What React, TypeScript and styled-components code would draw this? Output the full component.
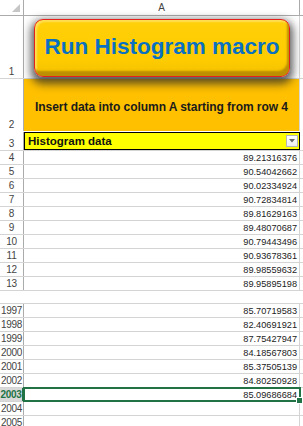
import React from "react";
import styled, { createGlobalStyle, css } from "styled-components";

const Global = createGlobalStyle`
  html, body { margin: 0; padding: 0; background: #fff; }
  body { font-family: "Liberation Sans", Arial, sans-serif; }
`;

const Sheet = styled.div`
  width: 303px;
  height: 426px;
  overflow: hidden;
  background: #fff;
  display: flex;
  flex-direction: column;
`;

const Row = styled.div<{ $h: number; $line?: string }>`
  display: grid;
  grid-template-columns: 24px 276px 3px;
  height: ${(p) => p.$h}px;
  box-sizing: border-box;
  border-bottom: 1px solid ${(p) => p.$line ?? "#d4d4d4"};
  flex: none;
`;

const HeaderRow = styled(Row)`
  border-bottom: 1px solid #ababab;
`;

const RowHead = styled.div<{ $sel?: boolean }>`
  box-sizing: border-box;
  border-right: 1px solid #ababab;
  display: flex;
  align-items: flex-end;
  justify-content: center;
  font-size: 10px;
  line-height: 12px;
  color: #444;
  font-family: "Liberation Sans", Arial, sans-serif;
  letter-spacing: -0.3px;
  ${(p) =>
    p.$sel &&
    css`
      background: #d9d9d9;
      color: #217346;
      font-weight: bold;
      border-right: 2px solid #217346;
    `}
`;

const Corner = styled.div`
  box-sizing: border-box;
  border-right: 1px solid #ababab;
  position: relative;
`;

const CornerTri = styled.svg`
  position: absolute;
  right: 3px;
  bottom: 3px;
`;

const ColHead = styled.div`
  box-sizing: border-box;
  border-right: 1px solid #ababab;
  display: flex;
  align-items: center;
  justify-content: center;
  font-size: 10px;
  color: #444;
`;

const Cell = styled.div<{ $bg?: string }>`
  box-sizing: border-box;
  border-right: 1px solid #d4d4d4;
  background: ${(p) => p.$bg ?? "transparent"};
  position: relative;
`;

const MacroCell = styled(Cell)`
  display: flex;
  align-items: center;
  justify-content: center;
`;

const MacroButton = styled.div`
  position: relative;
  z-index: 2;
  width: 256px;
  height: 58px;
  margin-top: 2px;
  margin-left: 1px;
  box-sizing: border-box;
  border: 1.5px solid #e3201b;
  border-radius: 9px;
  background: linear-gradient(#ffcf08, #ffcc00 70%, #f2c000);
  box-shadow: 0 4px 8px 3px rgba(40, 40, 40, 0.75),
    inset -3px -6px 2px -1px rgba(170, 125, 0, 0.75),
    inset 2px 2px 2px rgba(255, 235, 140, 0.6);
  display: flex;
  align-items: center;
  justify-content: center;
  color: #0a70c2;
  font-weight: bold;
  font-size: 22.5px;
  padding-bottom: 2px;
`;

const NoteCell = styled(Cell)`
  display: flex;
  align-items: center;
  justify-content: center;
  padding-top: 3px;
  font-weight: bold;
  font-size: 12px;
  color: #1b1b1b;
  letter-spacing: -0.05px;
`;

const TitleCell = styled.div`
  box-sizing: border-box;
  background: #ffff00;
  border: 1px solid #000;
  display: flex;
  align-items: center;
  justify-content: space-between;
  padding: 0 1px 0 3px;
  font-weight: bold;
  font-size: 11.5px;
  color: #111;
`;

const FilterBtn = styled.div`
  width: 12px;
  height: 12px;
  box-sizing: border-box;
  border: 1px solid #b5b5b5;
  background: linear-gradient(#ffffff, #ececec);
  display: flex;
  align-items: center;
  justify-content: center;
`;

const NumCell = styled(Cell)<{ $sel?: boolean }>`
  display: flex;
  align-items: flex-end;
  justify-content: flex-end;
  padding-right: 2px;
  font-size: 9.2px;
  line-height: 12px;
  color: #222;
  ${(p) =>
    p.$sel &&
    css`
      outline: 2px solid #217346;
      outline-offset: -1px;
      z-index: 1;
    `}
`;

const FillHandle = styled.div`
  position: absolute;
  right: -4px;
  bottom: -3px;
  width: 5px;
  height: 5px;
  background: #217346;
  border: 1px solid #fff;
`;

const Gap = styled.div`
  height: 12px;
  flex: none;
  border-bottom: 1px solid #d4d4d4;
`;

const top = [
  "89.21316376",
  "90.54042662",
  "90.02334924",
  "90.72834814",
  "89.81629163",
  "89.48070687",
  "90.79443496",
  "90.93678361",
  "89.98559632",
  "89.95895198",
];

const bottom: [number, string][] = [
  [1997, "85.70719583"],
  [1998, "82.40691921"],
  [1999, "87.75427947"],
  [2000, "84.18567803"],
  [2001, "85.37505139"],
  [2002, "84.80250928"],
  [2003, "85.09686684"],
  [2004, ""],
  [2005, ""],
];

export default function App() {
  return (
    <>
      <Global />
      <Sheet>
        <HeaderRow $h={16}>
          <Corner>
            <CornerTri width="8" height="8" viewBox="0 0 8 8">
              <polygon points="8,0 8,8 0,8" fill="#c6c6c6" />
            </CornerTri>
          </Corner>
          <ColHead>A</ColHead>
          <div />
        </HeaderRow>
        <Row $h={63}>
          <RowHead>1</RowHead>
          <MacroCell>
            <MacroButton>Run Histogram macro</MacroButton>
          </MacroCell>
          <div />
        </Row>
        <Row $h={53} $line="transparent">
          <RowHead>2</RowHead>
          <NoteCell $bg="#ffc000">
            Insert data into column A starting from row 4
          </NoteCell>
          <div />
        </Row>
        <Row $h={19} $line="#d4d4d4">
          <RowHead>3</RowHead>
          <TitleCell>
            Histogram data
            <FilterBtn>
              <svg width="6" height="4" viewBox="0 0 6 4">
                <polygon points="0,0 6,0 3,3.5" fill="#666" />
              </svg>
            </FilterBtn>
          </TitleCell>
          <div />
        </Row>
        {top.map((v, i) => (
          <Row key={v} $h={14}>
            <RowHead>{i + 4}</RowHead>
            <NumCell>{v}</NumCell>
            <div />
          </Row>
        ))}
        <Gap />
        {bottom.map(([n, v]) => (
          <Row key={n} $h={14}>
            <RowHead $sel={n === 2003}>{n}</RowHead>
            <NumCell $sel={n === 2003}>
              {v}
              {n === 2003 && <FillHandle />}
            </NumCell>
            <div />
          </Row>
        ))}
      </Sheet>
    </>
  );
}
